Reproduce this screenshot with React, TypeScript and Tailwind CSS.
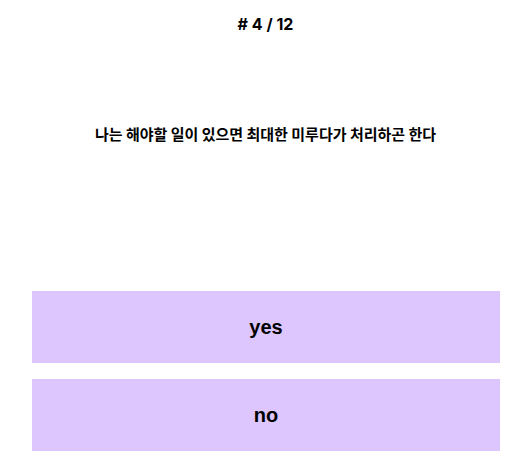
import React from 'react';

const App: React.FC = () => {
  const answers = ['yes', 'no'];

  return (
    <div className="w-[531px] h-[463px] bg-white flex flex-col font-['Inter','Noto_Sans_CJK_KR',sans-serif] text-black">
      <div className="pt-4 text-center text-base leading-4 font-bold">
        # 4 / 12
      </div>

      <div className="mt-[92px] text-center text-[15px] leading-5 font-bold font-['Noto_Sans_CJK_KR',sans-serif]">
        나는 해야할 일이 있으면 최대한 미루다가 처리하곤 한다
      </div>

      <div className="mt-[147px] flex flex-col gap-4 pl-8 pr-[31px]">
        {answers.map(answer => (
          <button
            key={answer}
            className="h-[72px] w-full bg-[#ddc6fd] text-[20px] font-bold font-['Liberation_Sans',sans-serif]"
          >
            {answer}
          </button>
        ))}
      </div>
    </div>
  );
};

export default App;
